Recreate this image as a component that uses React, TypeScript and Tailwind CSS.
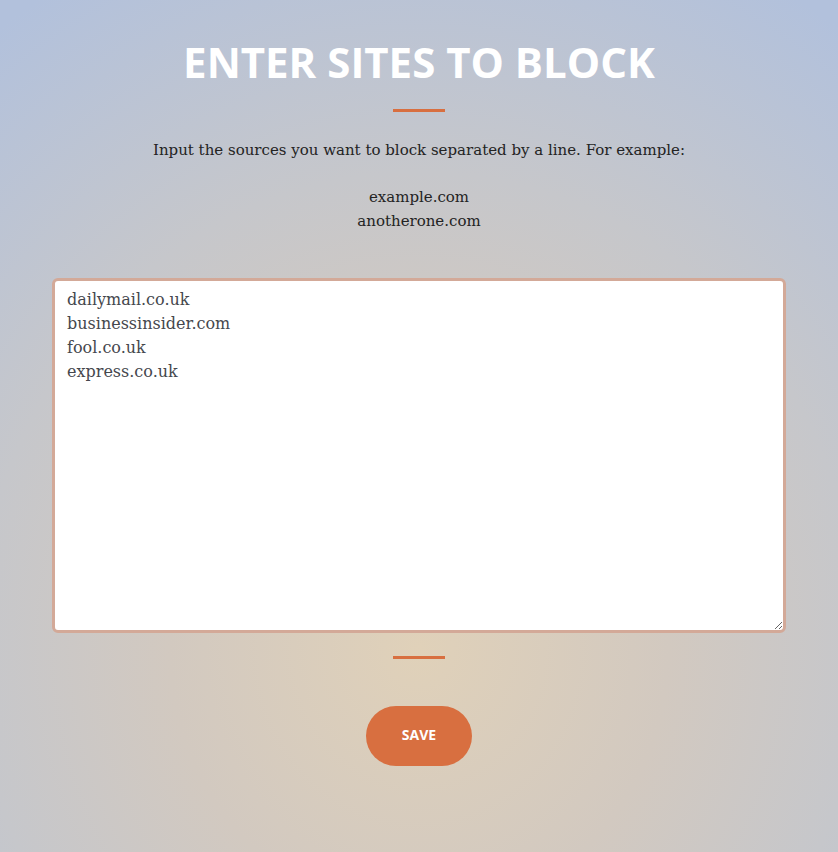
import React, { useState } from 'react';

const initialSites = ['dailymail.co.uk', 'businessinsider.com', 'fool.co.uk', 'express.co.uk'].join('\n');

// Short orange rule used above and below the form
const Divider: React.FC<{ className?: string }> = ({ className = '' }) => (
  <div className={`h-[3px] w-[52px] bg-[#d86f40] ${className}`} />
);

const App: React.FC = () => {
  const [sites, setSites] = useState(initialSites);

  return (
    <div className="min-h-screen w-full bg-[radial-gradient(ellipse_85%_90%_at_50%_76%,#e0d1b9_0%,#d2c9c0_35%,#c6c7cb_62%,#b2c1dc_100%)] font-['DejaVu_Serif',serif] text-[#232323]">
      <div className="flex flex-col items-center pt-[36px] pb-[86px]">
        <h1 className="font-['Open_Sans',sans-serif] text-[42px] font-bold leading-[52px] text-white">
          ENTER SITES TO BLOCK
        </h1>

        <Divider className="mt-[21px]" />

        <p className="mt-[26px] text-[15px] leading-[24px]">
          Input the sources you want to block separated by a line. For example:
        </p>

        <div className="mt-[23px] flex flex-col items-center text-[15px] leading-[24px]">
          <span>example.com</span>
          <span>anotherone.com</span>
        </div>

        <div className="mt-[45px] w-[734px]">
          <textarea
            value={sites}
            onChange={(e) => setSites(e.target.value)}
            spellCheck={false}
            className="block h-[355px] w-full resize-y rounded-[6px] border-[3px] border-[#d3a998] bg-white px-[12px] py-[7px] font-['DejaVu_Serif',serif] text-[16px] leading-[24px] text-[#45474d] outline-none"
          />
        </div>

        <Divider className="mt-[23px]" />

        <button className="mt-[47px] h-[60px] w-[106px] rounded-full bg-[#d86f40] pb-[4px] font-['Open_Sans',sans-serif] text-[14px] font-bold text-white">
          SAVE
        </button>
      </div>
    </div>
  );
};

export default App;
